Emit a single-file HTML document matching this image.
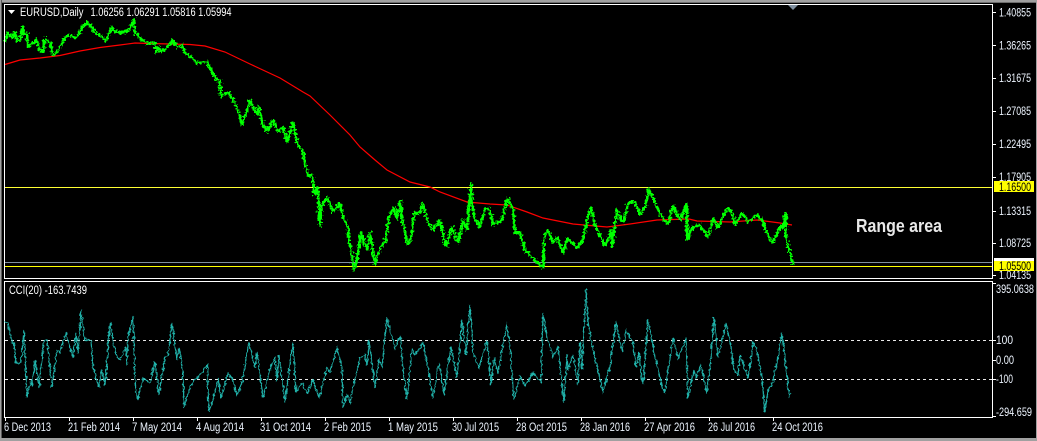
<!DOCTYPE html>
<html>
<head>
<meta charset="utf-8">
<style>
html,body{margin:0;padding:0;background:#000;width:1037px;height:441px;overflow:hidden}
svg{display:block}
text{font-family:"Liberation Sans",sans-serif;font-size:11.5px;fill:#fff}
.r{fill:#eef5ff}
</style>
</head>
<body>
<svg width="1037" height="441" viewBox="0 0 1037 441" xmlns="http://www.w3.org/2000/svg">
<defs>
<filter id="jg" filterUnits="userSpaceOnUse" x="0" y="0" width="1037" height="441" color-interpolation-filters="sRGB">
<feTurbulence type="fractalNoise" baseFrequency="0.45" numOctaves="2" seed="4" result="n"/>
<feDisplacementMap in="SourceGraphic" in2="n" scale="6" xChannelSelector="R" yChannelSelector="G"/>
</filter>
<filter id="jc" filterUnits="userSpaceOnUse" x="0" y="0" width="1037" height="441" color-interpolation-filters="sRGB">
<feTurbulence type="fractalNoise" baseFrequency="0.3" numOctaves="2" seed="9" result="n"/>
<feDisplacementMap in="SourceGraphic" in2="n" scale="4" xChannelSelector="R" yChannelSelector="G"/>
</filter>
</defs>
<rect width="1037" height="441" fill="#000"/>
<rect x="0" y="0" width="1037" height="2" fill="#a0a0a0"/>
<rect x="0" y="2" width="1037" height="1" fill="#6e6e6e"/>
<rect x="0" y="0" width="1" height="441" fill="#a0a0a0"/>
<rect x="1" y="0" width="1" height="441" fill="#5a5a5a"/>
<rect x="1036" y="0" width="1" height="441" fill="#a0a0a0"/>
<rect x="0" y="438" width="1037" height="3" fill="#a0a0a0"/>

<!-- levels -->
<rect x="5" y="187" width="987" height="1" fill="#ffff33"/>
<rect x="5" y="262" width="987" height="1" fill="#8090a0"/>
<rect x="5" y="266" width="987" height="1" fill="#ffff00"/>

<!-- red MA -->
<polyline fill="none" stroke="#ff0000" stroke-width="1.2" points="5,64.5 20,60 40,58 60,55.5 80,51 100,47.5 120,45 135,43 150,43.5 190,44.5 205,46 225,52 250,64 280,78 303,92 310,96 330,115 350,135 360,147 375,160 387,170 410,182 430,187 440,192 467,202 490,204 507,205 527,212 543,218 573,224 607,227 630,224 657,220 689,219 697,221 730,222 757,220 780,223 792,225"/>

<!-- green price -->
<g filter="url(#jg)">
<polyline fill="none" stroke="#00ff00" stroke-width="2.6" stroke-linejoin="bevel" shape-rendering="crispEdges" points="5,42 8,33 12,37 15,32 17,42 20,40 23,26 24,35 27,33 28,47 33,43 36,39 40,50 43,53 45,38 50,43 53,55 57,53 62,42 68,35 75,38 80,33 82,27 87,22 92,27 95,33 100,35 106,41 112,27 115,32 125,32 130,28 134,19 135,33 140,38 147,43 155,43 156,53 158,47 162,52 167,47 173,40 177,47 182,45 185,53 192,58 197,63 207,62 212,72 217,80 220,80 221,97 228,92 235,103 240,117 242,125 248,108 250,100 257,115 259,107 263,125 267,132 273,120 278,132 283,127 287,142 293,122 297,143 303,152 305,165 308,175 313,177 314,195 318,187 319,213 320,227 322,205 327,197 333,212 340,203 343,217 348,227 349,245 350,243 354,270 357,260 361,232 364,242 367,250 370,232 375,265 380,248 385,242 389,217 394,207 397,220 400,201 403,223 408,245 412,233 414,213 420,213 423,203 427,220 433,230 440,220 446,247 452,227 458,243 463,220 467,230 471,183 472,203 475,220 480,227 485,208 490,210 493,225 502,220 505,207 508,198 513,210 515,233 520,232 525,250 532,257 540,265 543,268 544,237 548,230 553,243 557,237 563,253 568,238 577,248 583,240 587,220 591,207 595,225 605,246 612,230 612,247 617,210 623,223 628,203 635,202 640,215 645,207 649,189 655,203 662,217 668,225 673,205 678,217 680,220 687,203 687,240 693,227 700,225 708,237 713,218 718,228 727,208 732,212 735,225 742,213 748,222 757,215 762,220 767,233 773,243 780,227 783,227 786,212 786,238 790,253 793,265"/>
</g>

<!-- frames -->
<rect x="4.5" y="4.5" width="988" height="274" fill="none" stroke="#fff"/>
<rect x="4.5" y="281.5" width="988" height="136" fill="none" stroke="#fff"/>
<polygon points="788,5 798,5 793,10" fill="#7f8f9f"/>

<!-- title -->
<polygon points="8,10 15,10 11.5,14" fill="#fff"/>
<text x="20" y="16" textLength="63.5" lengthAdjust="spacingAndGlyphs">EURUSD,Daily</text>
<text x="90.5" y="16" textLength="141" lengthAdjust="spacingAndGlyphs">1.06256 1.06291 1.05816 1.05994</text>

<!-- right axis ticks -->
<g fill="#fff">
<rect x="993" y="12" width="3" height="1"/><rect x="993" y="45" width="3" height="1"/><rect x="993" y="78" width="3" height="1"/><rect x="993" y="111" width="3" height="1"/><rect x="993" y="144" width="3" height="1"/><rect x="993" y="177" width="3" height="1"/><rect x="993" y="211" width="3" height="1"/><rect x="993" y="243" width="3" height="1"/><rect x="993" y="275" width="3" height="1"/>
<rect x="993" y="283" width="3" height="1"/><rect x="993" y="340" width="3" height="1"/><rect x="993" y="360" width="3" height="1"/><rect x="993" y="379" width="3" height="1"/><rect x="993" y="416" width="3" height="1"/>
</g>
<text class="r" x="999" y="16.5" textLength="32" lengthAdjust="spacingAndGlyphs">1.40855</text>
<text class="r" x="999" y="49.5" textLength="32" lengthAdjust="spacingAndGlyphs">1.36265</text>
<text class="r" x="999" y="82" textLength="32" lengthAdjust="spacingAndGlyphs">1.31675</text>
<text class="r" x="999" y="115" textLength="32" lengthAdjust="spacingAndGlyphs">1.27085</text>
<text class="r" x="999" y="148" textLength="32" lengthAdjust="spacingAndGlyphs">1.22495</text>
<text class="r" x="999" y="181" textLength="32" lengthAdjust="spacingAndGlyphs">1.17905</text>
<text class="r" x="999" y="215" textLength="32" lengthAdjust="spacingAndGlyphs">1.13315</text>
<text class="r" x="999" y="247" textLength="32" lengthAdjust="spacingAndGlyphs">1.08725</text>
<text class="r" x="999" y="279" textLength="32" lengthAdjust="spacingAndGlyphs">1.04135</text>
<rect x="994" y="181" width="40" height="11" fill="#ffff00"/>
<text x="999" y="191" textLength="32" lengthAdjust="spacingAndGlyphs" style="fill:#000">1.16500</text>
<rect x="994" y="258" width="40" height="5" fill="#fff"/>
<rect x="994" y="261" width="40" height="10" fill="#ffff00"/>
<text x="999" y="270" textLength="32" lengthAdjust="spacingAndGlyphs" style="fill:#000">1.05500</text>

<!-- range area -->
<text x="856" y="232" textLength="86" lengthAdjust="spacingAndGlyphs" style="font-size:18px;font-weight:bold;fill:#e8e8e8">Range area</text>

<!-- CCI -->
<text x="9" y="294" textLength="78" lengthAdjust="spacingAndGlyphs">CCI(20) -163.7439</text>
<line x1="5" x2="992" y1="340.5" y2="340.5" stroke="#e8e8e8" stroke-dasharray="3 3"/>
<line x1="5" x2="992" y1="379.5" y2="379.5" stroke="#e8e8e8" stroke-dasharray="3 3"/>
<g filter="url(#jc)">
<polyline fill="none" stroke="#20b2aa" stroke-width="1.2" points="5,322 8,323 12,343 14,343 16,363 21,363 24,330 27,397 31,380 32,387 35,360 39,387 44,340 47,340 52,388 57,350 60,353 66,332 68,342 73,357 76,333 78,353 81,310 85,340 91,340 93,368 99,387 102,370 105,385 110,323 115,352 120,360 126,347 127,365 128,338 133,316 135,377 136,393 138,398 143,378 150,383 155,362 159,394 165,358 168,355 172,323 177,360 179,347 183,373 184,407 190,387 197,377 202,373 207,365 209,411 213,400 218,378 221,398 228,373 233,380 237,395 242,383 245,365 249,342 255,368 257,352 263,398 270,368 275,358 277,382 279,355 285,402 293,342 296,392 302,383 307,393 313,380 319,397 327,367 330,372 337,348 342,368 343,407 347,395 350,402 353,388 360,358 365,355 367,365 369,340 375,388 379,360 382,367 387,318 392,337 395,348 400,337 403,368 407,399 412,348 415,355 423,343 428,367 433,398 439,363 444,394 451,347 457,378 462,320 466,355 470,304 473,353 479,368 487,340 491,385 494,358 498,373 507,323 510,348 514,400 520,377 525,386 533,373 541,382 543,313 547,338 553,357 558,347 564,402 567,355 568,370 573,355 578,385 580,342 582,370 586,289 588,322 593,350 603,392 610,367 616,322 622,352 626,330 633,343 636,367 639,353 643,385 648,319 655,357 662,387 665,392 673,338 678,358 683,347 686,338 688,398 694,370 696,378 701,365 707,394 711,358 714,317 718,357 722,340 726,323 731,347 734,370 738,375 740,354 748,378 753,343 757,351 762,378 765,412 768,390 772,385 777,363 782,333 787,378 789,396 792,393"/>
</g>

<text class="r" x="996" y="293" textLength="38" lengthAdjust="spacingAndGlyphs">395.0638</text>
<text class="r" x="996" y="344" textLength="17" lengthAdjust="spacingAndGlyphs">100</text>
<text class="r" x="996" y="364" textLength="18" lengthAdjust="spacingAndGlyphs">0.00</text>
<text class="r" x="996" y="383" textLength="17" lengthAdjust="spacingAndGlyphs">-100</text>
<text class="r" x="996" y="416" textLength="36" lengthAdjust="spacingAndGlyphs">-294.659</text>

<!-- time axis -->
<g fill="#fff">
<rect x="5" y="418" width="1" height="3"/><rect x="69" y="418" width="1" height="3"/><rect x="133" y="418" width="1" height="3"/><rect x="197" y="418" width="1" height="3"/><rect x="261" y="418" width="1" height="3"/><rect x="325" y="418" width="1" height="3"/><rect x="389" y="418" width="1" height="3"/><rect x="453" y="418" width="1" height="3"/><rect x="517" y="418" width="1" height="3"/><rect x="581" y="418" width="1" height="3"/><rect x="645" y="418" width="1" height="3"/><rect x="709" y="418" width="1" height="3"/><rect x="773" y="418" width="1" height="3"/>
</g>
<text class="r" x="4" y="431" textLength="47" lengthAdjust="spacingAndGlyphs">6 Dec 2013</text>
<text class="r" x="68" y="431" textLength="52" lengthAdjust="spacingAndGlyphs">21 Feb 2014</text>
<text class="r" x="132" y="431" textLength="50" lengthAdjust="spacingAndGlyphs">7 May 2014</text>
<text class="r" x="196" y="431" textLength="48" lengthAdjust="spacingAndGlyphs">4 Aug 2014</text>
<text class="r" x="260" y="431" textLength="51" lengthAdjust="spacingAndGlyphs">31 Oct 2014</text>
<text class="r" x="324" y="431" textLength="47" lengthAdjust="spacingAndGlyphs">2 Feb 2015</text>
<text class="r" x="388" y="431" textLength="50" lengthAdjust="spacingAndGlyphs">1 May 2015</text>
<text class="r" x="452" y="431" textLength="47" lengthAdjust="spacingAndGlyphs">30 Jul 2015</text>
<text class="r" x="516" y="431" textLength="51" lengthAdjust="spacingAndGlyphs">28 Oct 2015</text>
<text class="r" x="580" y="431" textLength="50" lengthAdjust="spacingAndGlyphs">28 Jan 2016</text>
<text class="r" x="644" y="431" textLength="51" lengthAdjust="spacingAndGlyphs">27 Apr 2016</text>
<text class="r" x="708" y="431" textLength="47" lengthAdjust="spacingAndGlyphs">26 Jul 2016</text>
<text class="r" x="772" y="431" textLength="51" lengthAdjust="spacingAndGlyphs">24 Oct 2016</text>
</svg>
</body>
</html>
